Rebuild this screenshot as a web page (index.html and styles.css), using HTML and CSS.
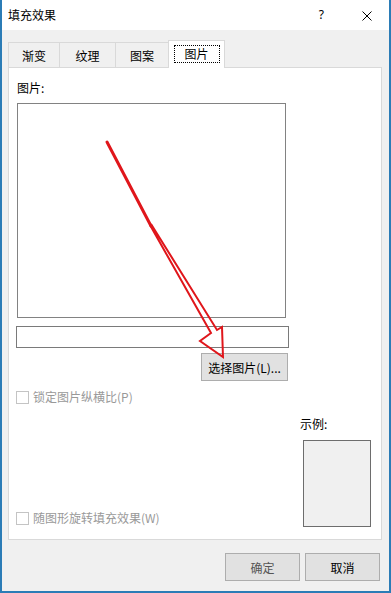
FILE: index.html
```html
<!DOCTYPE html>
<html lang="zh-CN">
<head>
    <meta charset="UTF-8">
    <meta name="viewport" content="width=device-width, initial-scale=1.0">
    <title>填充效果</title>
    <link rel="stylesheet" href="styles.css">
</head>
<body>
    <div class="screen">
        <div class="dialog">
            <div class="titlebar">
                <span class="title">填充效果</span>
                <span class="help">?</span>
                <svg class="close" width="10" height="10" viewBox="0 0 10 10">
                    <path d="M0.5 0.5 L9.5 9.5 M9.5 0.5 L0.5 9.5" stroke="#000" stroke-width="1" fill="none"/>
                </svg>
            </div>

            <div class="body">
                <!-- Tabs -->
                <div class="tabs">
                    <div class="tab tab-1">渐变</div>
                    <div class="tab tab-2">纹理</div>
                    <div class="tab tab-3">图案</div>
                    <div class="tab tab-active"><span class="focus">图片</span></div>
                </div>

                <div class="panel">
                    <div class="label">图片:</div>
                    <div class="picture"></div>
                    <div class="path"></div>
                    <div class="pick-row">
                        <button class="btn pick">选择图片(L)...</button>
                    </div>
                    <div class="check check-lock">
                        <span class="box"></span>
                        <span>锁定图片纵横比(P)</span>
                    </div>

                    <div class="bottom">
                        <div class="check check-rotate">
                            <span class="box"></span>
                            <span>随图形旋转填充效果(W)</span>
                        </div>
                        <div class="sample">
                            <div class="sample-label">示例:</div>
                            <div class="sample-box"></div>
                        </div>
                    </div>
                </div>

                <div class="actions">
                    <button class="btn action ok">确定</button>
                    <button class="btn action">取消</button>
                </div>
            </div>
        </div>

        <!-- hand drawn arrow over the dialog -->
        <svg class="arrow" width="391" height="593" viewBox="0 0 391 593">
            <path d="M107 142 L151 226" stroke="#e0161b" stroke-width="3" stroke-linecap="round" fill="none"/>
            <path d="M150 225 L211 333 L200 341 L223 357 L222 327 L217 330 L151 224" stroke="#e0161b" stroke-width="2" stroke-linejoin="miter" fill="none"/>
        </svg>
    </div>
</body>
</html>
```

FILE: styles.css
```css
body {
    margin: 0;
    padding: 0;
    font-family: "Noto Sans CJK SC", "Noto Sans", sans-serif;
    font-size: 12px;
    color: #000;
    background: #fff;
}
.screen {
    position: relative;
    width: 391px;
    height: 593px;
    overflow: hidden;
}
.dialog {
    width: 391px;
    height: 593px;
    box-sizing: border-box;
    border-left: 2px solid #2b7cb6;
    border-right: 2px solid #2b7cb6;
    border-bottom: 2px solid #2b7cb6;
    display: flex;
    flex-direction: column;
}
.titlebar {
    height: 30px;
    background: #fff;
    display: flex;
    align-items: center;
    padding-left: 6px;
}
.title {
    font-size: 12px;
    line-height: 30px;
}
.help {
    margin-left: auto;
    margin-right: 38px;
    font-family: "Noto Sans", sans-serif;
    font-size: 12px;
    line-height: 12px;
}
.close {
    display: block;
    margin-right: 17px;
    margin-top: 1px;
}
.body {
    flex: 1;
    background: #f0f0f0;
    padding: 10px 7px 0 6px;
    display: flex;
    flex-direction: column;
}
.tabs {
    height: 27px;
    display: flex;
    align-items: flex-end;
}
.tab {
    height: 25px;
    box-sizing: border-box;
    border: 1px solid #d9d9d9;
    border-bottom: none;
    background: #f0f0f0;
    display: flex;
    align-items: center;
    justify-content: center;
    padding-top: 1px;
}
.tab-1 { width: 52px; }
.tab-2 { width: 56px; border-left: none; }
.tab-3 { width: 53px; border-left: none; }
.tab-active {
    width: 57px;
    height: 28px;
    margin-bottom: -1px;
    margin-left: -1px;
    background: #fff;
    position: relative;
    z-index: 1;
    padding-top: 0;
    padding-bottom: 1px;
}
.focus {
    display: block;
    width: 46px;
    height: 18px;
    box-sizing: border-box;
    border: 1px dotted #000;
    text-align: center;
    line-height: 16px;
}
.panel {
    height: 473px;
    box-sizing: border-box;
    border: 1px solid #d9d9d9;
    background: #fff;
    padding: 12px 10px 12px 8px;
    display: flex;
    flex-direction: column;
}
.label {
    line-height: 16px;
}
.picture {
    margin-top: 7px;
    width: 269px;
    height: 215px;
    box-sizing: border-box;
    border: 1px solid #828282;
}
.path {
    margin-top: 8px;
    margin-left: -1px;
    width: 273px;
    height: 22px;
    box-sizing: border-box;
    border: 1px solid #7a7a7a;
}
.pick-row {
    margin-top: 5px;
    width: 271px;
    display: flex;
    justify-content: flex-end;
}
.btn {
    font-family: "Noto Sans CJK SC", "Noto Sans", sans-serif;
    font-size: 12px;
    color: #000;
    background: #e1e1e1;
    border: 1px solid #adadad;
    border-radius: 0;
    padding: 0;
    height: 28px;
    box-sizing: border-box;
}
.pick {
    width: 87px;
}
.check {
    display: flex;
    align-items: center;
    gap: 4px;
    color: #999;
    line-height: 16px;
    margin-left: -1px;
}
.check .box {
    width: 13px;
    height: 13px;
    box-sizing: border-box;
    border: 1px solid #c4c4c4;
    background: #fff;
}
.check-lock {
    margin-top: 8px;
}
.bottom {
    margin-top: auto;
    display: flex;
    justify-content: space-between;
    align-items: flex-end;
}
.check-rotate {
    margin-bottom: 1px;
}
.sample {
    display: flex;
    flex-direction: column;
    align-items: flex-end;
}
.sample-label {
    width: 71px;
    line-height: 16px;
}
.sample-box {
    margin-top: 8px;
    width: 68px;
    height: 87px;
    box-sizing: border-box;
    border: 1px solid #6d6d6d;
    background: #f0f0f0;
}
.actions {
    margin-top: 13px;
    margin-right: 2px;
    display: flex;
    justify-content: flex-end;
    gap: 5px;
}
.action {
    width: 75px;
}
.ok {
    color: #555;
}
.arrow {
    position: absolute;
    left: 0;
    top: 0;
    pointer-events: none;
}
```
